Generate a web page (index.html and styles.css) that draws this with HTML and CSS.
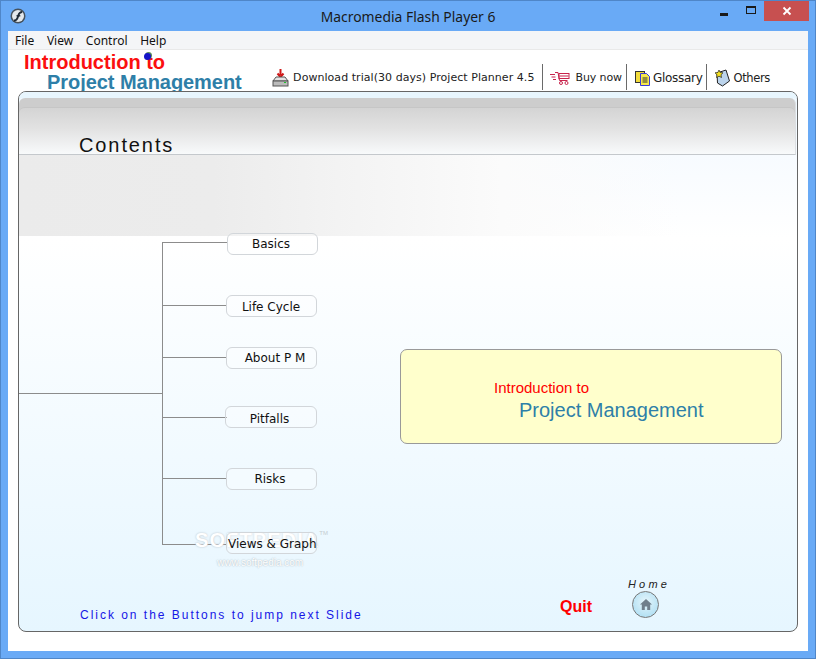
FILE: index.html
```html
<!DOCTYPE html>
<html lang="en">
<head>
<meta charset="utf-8">
<title>Macromedia Flash Player 6</title>
<link rel="stylesheet" href="styles.css">
</head>
<body>
<div class="window">
  <header class="titlebar">
    <svg class="app-icon" width="16" height="16" viewBox="0 0 16 16"><circle cx="8" cy="8" r="7.500" fill="#46525e"/><circle cx="8" cy="8" r="6" fill="#e4e8ec"/><path d="M4 12.500c2.800 0 3.400-1.600 4.200-4.600.6-2.200 1.400-3.900 4-3.900" fill="none" stroke="#1f2a36" stroke-width="1.900"/><path d="M6.500 7.800h3.800" stroke="#1f2a36" stroke-width="1.400"/></svg>
    <div class="title">Macromedia Flash Player 6</div>
    <div class="controls">
      <span class="ctl ctl-min"><i></i></span>
      <span class="ctl ctl-max"><i></i></span>
      <span class="ctl ctl-close"><svg width="10" height="10" viewBox="0 0 10 10"><path d="M1.500 1.500l7 7M8.500 1.500l-7 7" stroke="#fff" stroke-width="1.800"/></svg></span>
    </div>
  </header>
  <div class="client">
    <nav class="menubar"><span>File</span><span>View</span><span>Control</span><span>Help</span></nav>
    <div class="stage">
      <div class="topbar">
        <div class="logo">
          <div class="logo-a">Introduction to</div>
          <div class="logo-b">Project Management</div>
          <span class="cursor-dot"></span>
        </div>
        <div class="links">
          <div class="link link-dl">
            <svg width="17" height="18" viewBox="0 0 17 18"><path d="M8.500 0v6M5.500 4.500l3 3.500 3-3.500" fill="none" stroke="#d01818" stroke-width="2"/><path d="M4 8h9l3 4H1z" fill="#e4e4e4" stroke="#555"/><rect x="1" y="12" width="15" height="5" fill="#bbb" stroke="#555"/><rect x="12" y="13" width="2" height="1" fill="#1bc42a"/></svg>
            <span>Download trial(30 days) Project Planner 4.5</span>
          </div>
          <div class="link link-buy">
            <svg width="21" height="14" viewBox="0 0 21 14"><path d="M1 3.500h5M2.500 6h4M4 8.500h3M6 1.500h3l1.500 8h8M10.500 5h9" fill="none" stroke="#c8244c"/><rect x="10" y="2.500" width="10" height="5" fill="none" stroke="#c8244c"/><circle cx="12" cy="12" r="1.500" fill="none" stroke="#c8244c"/><circle cx="17.500" cy="12" r="1.500" fill="none" stroke="#c8244c"/></svg>
            <span>Buy now</span>
          </div>
          <div class="link link-glo">
            <svg width="16" height="16" viewBox="0 0 16 16"><rect x=".5" y="1.500" width="9" height="11" fill="#f2dc3c" stroke="#333"/><path d="M5.500 3.500h6l3 3v9h-9z" fill="#f6e84a" stroke="#3a3ad8"/><path d="M7.500 8h5M7.500 10h5M7.500 12h5" stroke="#333"/></svg>
            <span>Glossary</span>
          </div>
          <div class="link link-oth">
            <svg width="16" height="18" viewBox="0 0 16 18"><path d="M3 4l9-3 3.500 11-7 5-5-3z" fill="#bcd4ec" stroke="#222"/><path d="M5 1l1.200 2.500 2.800.3-2 1.900.5 2.800L5 7.200 2.500 8.500 3 5.700l-2-1.900 2.800-.3z" fill="#f4e020" stroke="#222" stroke-width=".7"/></svg>
            <span>Others</span>
          </div>
        </div>
      </div>
      <main class="panel">
        <div class="band">
          <div class="band-inner"><h1 class="band-title">Contents</h1></div>
        </div>
        <div class="fade"></div>
        <div class="tree">
          <i class="ln ln-root"></i>
          <i class="ln ln-spine"></i>
          <i class="ln ln-b1"></i><i class="ln ln-b2"></i><i class="ln ln-b3"></i>
          <i class="ln ln-b4"></i><i class="ln ln-b5"></i><i class="ln ln-b6"></i>
          <div class="mark mark-a">SOFTPEDIA<sup class="tm">TM</sup></div>
          <div class="mark mark-b">www.softpedia.com</div>
          <div class="node n1">Basics</div>
          <div class="node n2">Life Cycle</div>
          <div class="node n3">About P M</div>
          <div class="node n4">Pitfalls</div>
          <div class="node n5">Risks</div>
          <div class="node n6">Views &amp; Graph</div>
        </div>
        <div class="note">
          <div class="note-a">Introduction to</div>
          <div class="note-b">Project Management</div>
        </div>
        <div class="hint">Click on the Buttons to jump next Slide</div>
        <div class="quit">Quit</div>
        <div class="home">
          <div class="home-label">Home</div>
          <div class="home-btn"><svg width="12" height="11" viewBox="0 0 12 11"><path d="M6 0L0 5.500h1.800V11h3V7.500h2.400V11h3V5.500H12z" fill="#6f7f8c"/></svg></div>
        </div>
      </main>
    </div>
  </div>
</div>
</body>
</html>
```

FILE: styles.css
```css
* { box-sizing: border-box; }
html, body { margin: 0; padding: 0; }
body { width: 816px; height: 659px; overflow: hidden; font-family: "Liberation Sans", Arial, sans-serif; }

.window {
  width: 816px; height: 659px;
  background: #69aaf6;
  border: 1px solid #4f86c8;
  display: flex; flex-direction: column;
}

.titlebar { height: 30px; position: relative; display: flex; align-items: center; justify-content: center; flex: none; }
.app-icon { position: absolute; left: 9px; top: 7px; }
.title { font-family: "Noto Sans", "Open Sans", sans-serif; font-size: 13.900px; color: #1a1a1a; }
.controls { position: absolute; top: 0; right: 6px; display: flex; align-items: flex-start; }
.ctl { display: flex; align-items: center; justify-content: center; height: 20px; }
.ctl-min { width: 26px; margin-right: 1px; }
.ctl-min i { display: block; width: 8px; height: 3px; background: #1a1a1a; margin-top: 6px; }
.ctl-max { width: 25px; margin-right: 1px; }
.ctl-max i { display: block; width: 10px; height: 8px; border: 1px solid #1a1a1a; border-top-width: 2px; margin-top: -2px; }
.ctl-close { width: 45px; background: #c75050; }

.client { flex: 1; margin: 0 7px 7px; background: #fff; display: flex; flex-direction: column; min-height: 0; }

.menubar { height: 19px; background: #f4f5f7; border-bottom: 1px solid #e9e9e9; display: flex; align-items: center; gap: 12.700px; padding-left: 7px; font-family: "Noto Sans", "Open Sans", sans-serif; font-size: 12px; color: #111; flex: none; }

.stage { flex: 1; display: flex; flex-direction: column; padding: 0 10px 19px; min-height: 0; }

.topbar { height: 41px; flex: none; display: flex; justify-content: space-between; }

.logo { position: relative; font-weight: 700; padding: 2px 0 0 6px; line-height: 21px; white-space: nowrap; }
.logo-a { color: #fb0f0f; font-size: 20px; }
.logo-b { color: #2e7fa8; font-size: 20px; margin-left: 23px; letter-spacing: -.05px; margin-top: -1px; }
.cursor-dot { position: absolute; left: 126px; top: 3px; width: 7px; height: 7px; border-radius: 50%; background: #1414c8; box-shadow: 1px -1px 0 #5a8a5a; }

.links { display: flex; align-items: flex-start; padding-top: 14px; margin-right: 28px; font-family: "DejaVu Sans", sans-serif; font-size: 11px; color: #222; white-space: nowrap; }
.link { height: 26px; display: flex; align-items: center; padding-top: 1px; }
.link + .link { border-left: 1px solid #6a6a6a; }
.link-dl { padding-right: 8px; gap: 4px; letter-spacing: .05px; }
.link-buy { padding: 1px 4px 0 6px; gap: 5px; letter-spacing: -.1px; }
.link-glo { padding: 1px 4px 0 8px; gap: 2px; font-size: 12px; letter-spacing: -.3px; }
.link-oth { padding: 1px 0 0 7px; gap: 3px; font-size: 11.500px; letter-spacing: -.35px; }

.panel {
  flex: 1; position: relative; min-height: 0;
  border: 1px solid #666;
  border-radius: 8px;
  background: linear-gradient(#eef8ff 0, #f7fbff 64px, #fff 146px, #e6f6ff 100%);
  overflow: hidden;
}
.panel::before { content: ""; position: absolute; left: 0; right: 0; top: 0; height: 6px; background: #e8f6fe; }

.band {
  height: 57px; margin: 6px 1px 0 0; padding-top: 9px;
  background: #cdcdcd;
  border-bottom: 1px solid #c4c8cc;
  border-right: 1px solid #dcdfe2;
  border-radius: 6px 6px 0 0;
}
.band-inner {
  height: 47px; position: relative;
  border-top: 1px solid #c6c6c6;
  border-radius: 6px 6px 0 0;
  background: linear-gradient(#d4d4d4, #e2e2e2 45%, #f8fafb 100%);
}
.band-title { position: absolute; left: 60px; top: 26px; margin: 0; font-size: 20px; font-weight: 400; letter-spacing: 1.900px; color: #111; line-height: 23px; }

.fade { height: 81px; background: linear-gradient(90deg, #ebebeb, #ececec 25%, #f3f3f3 41%, #fbfbfb 62%, rgba(255,255,255,0) 85%); }

.tree { position: absolute; inset: 0; pointer-events: none; }
.ln { position: absolute; background: #8c8c8c; display: block; }
.ln-root { left: 0; top: 301px; width: 144px; height: 1px; }
.ln-spine { left: 143px; top: 150px; width: 1px; height: 303px; }
.ln-b1 { left: 143px; top: 150px; width: 65px; height: 1px; }
.ln-b2 { left: 143px; top: 213px; width: 65px; height: 1px; }
.ln-b3 { left: 143px; top: 265px; width: 65px; height: 1px; }
.ln-b4 { left: 143px; top: 325px; width: 65px; height: 1px; }
.ln-b5 { left: 143px; top: 386px; width: 65px; height: 1px; }
.ln-b6 { left: 143px; top: 452px; width: 65px; height: 1px; }

.node {
  position: absolute; width: 91px; height: 22px;
  border: 1px solid #d2d6da; border-radius: 6px;
  background: rgba(255,255,255,.3);
  font-family: "DejaVu Sans", sans-serif; font-size: 12px; color: #111;
  line-height: 20px; text-align: center; white-space: nowrap;
}
.n1 { left: 208px; top: 141px; padding-right: 3px; }
.n2 { left: 207px; top: 203px; padding: 1px 1px 0 0; }
.n3 { left: 207px; top: 255px; padding-left: 7px; }
.n4 { left: 206px; top: 314px; width: 92px; padding: 2px 3px 0 0; }
.n5 { left: 207px; top: 376px; padding-right: 3px; }
.n6 { left: 207px; top: 440px; padding: 1px 0 0 1px; }

.mark { position: absolute; white-space: nowrap; color: #fff; }
.mark-a { left: 176px; top: 437px; font-size: 20px; font-weight: 700; letter-spacing: 1.100px; text-shadow: 0 0 2px #b4bcc2; }
.tm { font-size: 6px; font-weight: 400; vertical-align: 12px; letter-spacing: 0; color: #c4ccd0; text-shadow: none; }
.mark-b { left: 198px; top: 465px; font-size: 10px; color: #fff; text-shadow: 0 0 1.500px #98a4aa; }

.note {
  position: absolute; left: 381px; top: 257px; width: 382px; height: 95px;
  background: #ffffcc; border: 1px solid #999; border-radius: 7px;
}
.note-a { position: absolute; left: 93px; top: 29px; font-size: 15px; color: #f00; white-space: nowrap; line-height: 17px; }
.note-b { position: absolute; left: 118px; top: 49px; font-size: 20px; color: #2e7fa8; white-space: nowrap; }

.hint { position: absolute; left: 61px; top: 516px; font-size: 12px; letter-spacing: 1.980px; color: #1515e6; white-space: nowrap; }
.quit { position: absolute; left: 541px; top: 506px; font-size: 16px; font-weight: 700; color: #f00; }
.home { position: absolute; left: 609px; top: 486px; display: flex; flex-direction: column; align-items: center; width: 42px; }
.home-label { font-size: 11px; font-style: italic; letter-spacing: 3.200px; color: #222; line-height: 13px; white-space: nowrap; }
.home-btn {
  width: 27px; height: 27px; margin-top: 0; margin-left: -7px;
  border: 1px solid #777; border-radius: 50%;
  background: radial-gradient(circle at 50% 40%, #e6f6fc, #aadcf2 90%);
  display: flex; align-items: center; justify-content: center;
}
```
